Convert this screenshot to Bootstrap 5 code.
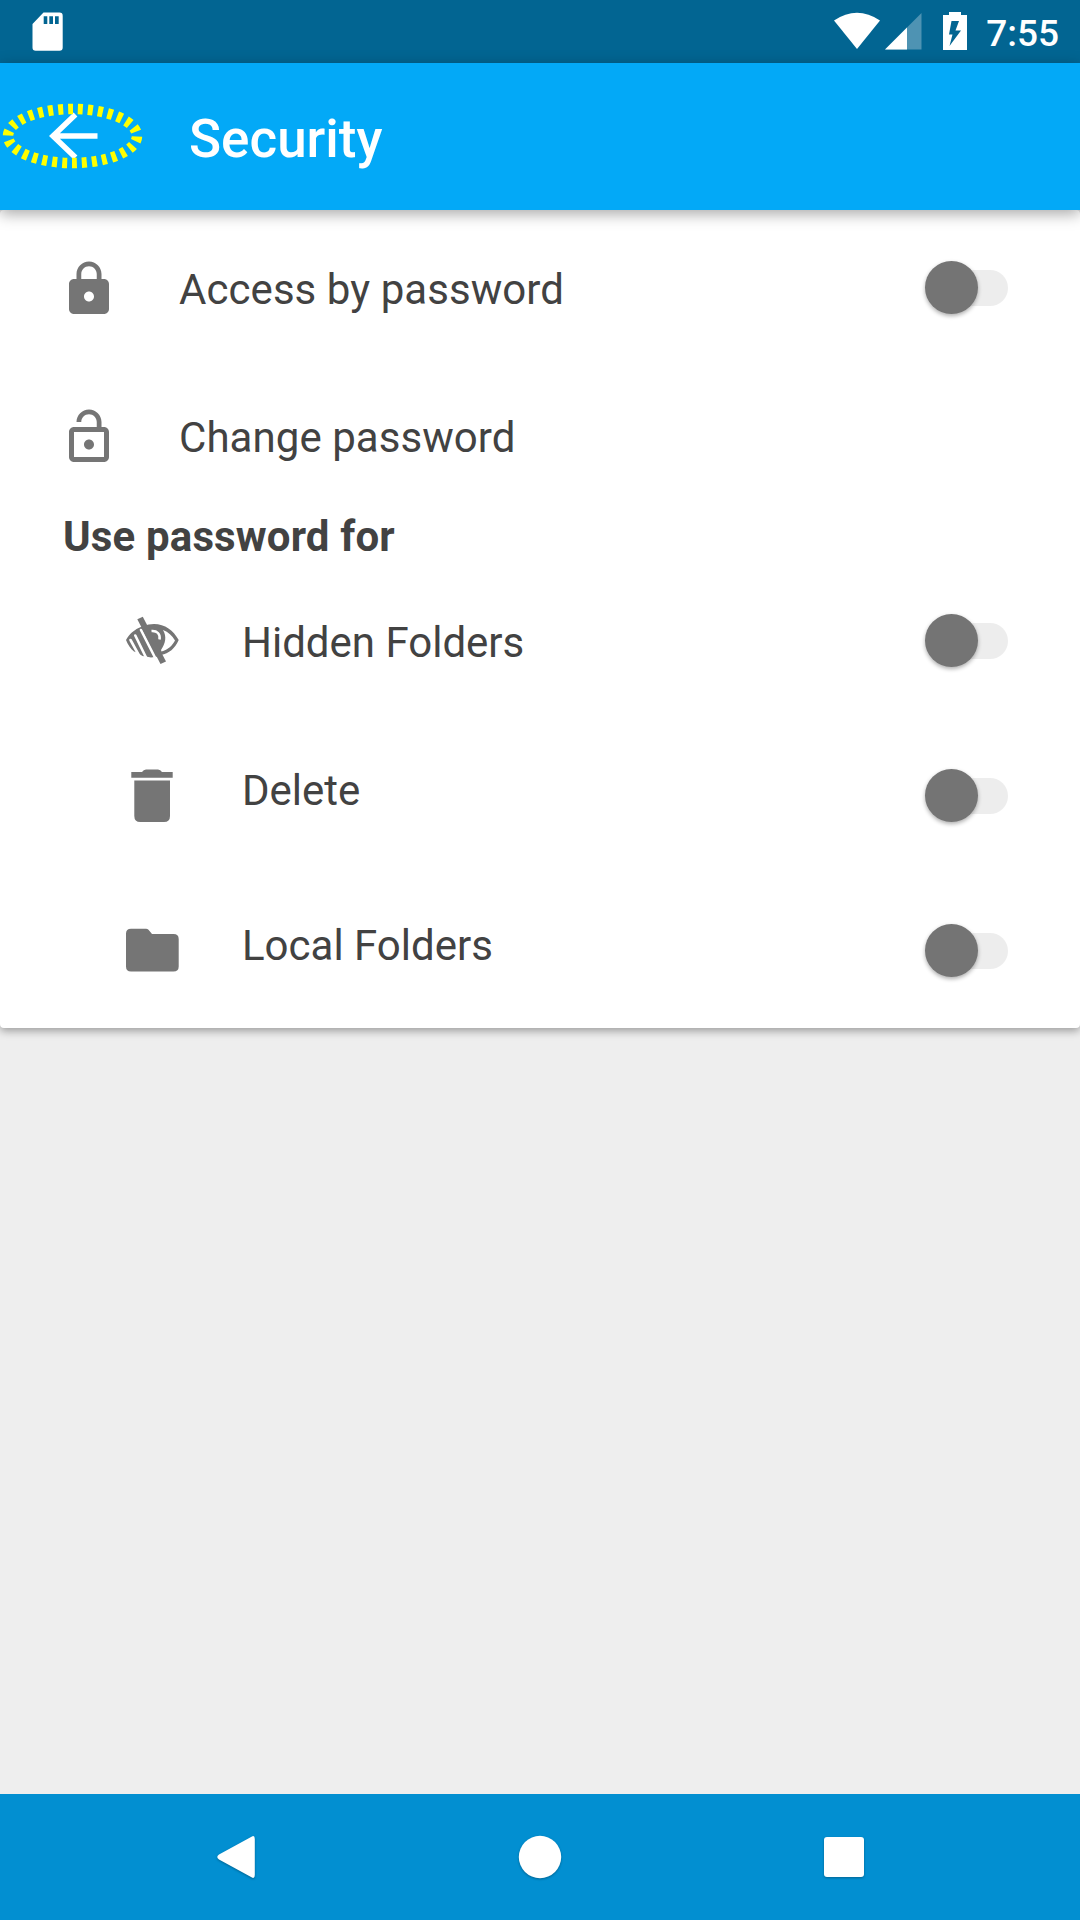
<!DOCTYPE html>
<html lang="en">
<head>
<meta charset="utf-8">
<meta name="viewport" content="width=device-width, initial-scale=1">
<title>Security</title>
<link href="https://cdn.jsdelivr.net/npm/bootstrap@5.3.0/dist/css/bootstrap.min.css" rel="stylesheet">
<style>
  body { font-family: Roboto, "Noto Sans", sans-serif; background: #eee; color: #424242; font-size: 42px; line-height: 54px; height: 1920px; overflow: hidden; }
  svg { display: block; flex: none; }
  .status-bar { height: 63px; background: #026592; padding: 0 21px 0 32px; }
  .clock { font-size: 37px; font-weight: 500; line-height: 63px; padding-top: 3px; margin-left: 18px; }
  .app-bar { height: 147px; background: #03a9f7; padding-bottom: 2px; z-index: 2; box-shadow: 0 4px 14px rgba(0,0,0,.34); }
  .app-title { font-size: 53px; font-weight: 500; line-height: 60px; margin-left: 44px; padding-top: 7px; }
  .settings-card { border-radius: 4px; padding-top: 3px; box-shadow: 0 3px 8px rgba(0,0,0,.35); z-index: 1; }
  .setting { height: 148px; padding: 0 72px 0 59px; }
  .setting-sub { height: 155px; padding-left: 122px; }
  .setting-icon { width: 60px; height: 60px; fill: #757575; }
  .icon-lowered { margin-top: 3px; }
  .setting-label { margin-left: 60px; padding-top: 4px; }
  .label-lowered { padding-top: 6px; letter-spacing: .06px; }
  .label-raised { padding: 0 0 10px; }
  .section-title { height: 54px; padding: 1px 0 0 63px; font-weight: 700; letter-spacing: .15px; }
  .toggle { width: 83px; height: 53px; padding: 9px 0 8px 10px; }
  .toggle-track { height: 36px; border-radius: 18px; background: #ededed; }
  .toggle-thumb { width: 53px; height: 53px; left: 0; top: 0; background: #747474; box-shadow: 0 2px 4px rgba(0,0,0,.32); }
  .nav-bar { height: 126px; background: #028fd1; }
  .nav-bar svg { filter: drop-shadow(0 1px 1px rgba(0,0,0,.3)); }
</style>
<script src="https://cdn.jsdelivr.net/npm/bootstrap@5.3.0/dist/js/bootstrap.bundle.min.js"></script>
</head>
<body class="d-flex flex-column">
  <div class="status-bar d-flex align-items-center text-white">
    <svg width="31" height="63" viewBox="32 0 31 63" fill="#fff"><path fill-rule="evenodd" d="M43.500 12.500H59.500Q62.700 12.500 62.700 15.700V47.500Q62.700 50.700 59.500 50.700H35.700Q32.500 50.700 32.500 47.500V24ZM43.700 16.200V24H47.300V16.200ZM49.300 16.200V24H53V16.200ZM55 16.200V24H58.700V16.200Z"/></svg>
    <svg class="ms-auto" width="134" height="63" viewBox="834 0 134 63" fill="#fff">
      <path d="M834 20.500Q857 5 880 20.500L857 49Z"/>
      <path d="M921.500 13V49.500H885Z" opacity=".3"/><path d="M907 27.500V49.500H885Z"/>
      <path fill-rule="evenodd" d="M949 12H961V15H967V50H943V15H949ZM951.500 21L949 34.500H952.500L949.500 46L961 30.500H955.500L959 21Z"/>
    </svg>
    <span class="clock">7:55</span>
  </div>

  <header class="app-bar d-flex align-items-center text-white position-relative">
    <svg width="145" height="145" viewBox="0 63 145 145" fill="none">
      <path d="M97.500 136H53M75.500 114.500L53 136L75.500 157.500" stroke="#fff" stroke-width="5.500"/>
      <path d="M72.500 109A64.500 27 0 0 1 72.500 163A64.500 27 0 0 1 72.500 109" pathLength="300" stroke="#ff0" stroke-width="10.500" stroke-dasharray="5 5" stroke-dashoffset="-5.500"/>
    </svg>
    <h1 class="app-title mb-0">Security</h1>
  </header>

  <main class="settings-card bg-white position-relative">
    <div class="setting d-flex align-items-center">
      <svg class="setting-icon icon-lowered" viewBox="0 0 24 24"><path d="M18 8h-1V6c0-2.760-2.240-5-5-5S7 3.240 7 6v2H6c-1.100 0-2 .9-2 2v10c0 1.100.9 2 2 2h12c1.100 0 2-.9 2-2V10c0-1.100-.9-2-2-2zm-6 9c-1.100 0-2-.9-2-2s.9-2 2-2 2 .9 2 2-.9 2-2 2zm3.100-9H8.900V6c0-1.710 1.390-3.100 3.100-3.100s3.100 1.390 3.100 3.100v2z"/></svg>
      <span class="setting-label label-lowered">Access by password</span>
      <div class="toggle position-relative ms-auto"><div class="toggle-track"></div><div class="toggle-thumb position-absolute rounded-circle"></div></div>
    </div>
    <div class="setting d-flex align-items-center">
      <svg class="setting-icon icon-lowered" viewBox="0 0 24 24"><path d="M12 17c1.100 0 2-.9 2-2s-.9-2-2-2-2 .9-2 2 .9 2 2 2zm6-9h-1V6c0-2.760-2.240-5-5-5S7 3.240 7 6h1.900c0-1.710 1.390-3.100 3.100-3.100s3.100 1.390 3.100 3.100v2H6c-1.100 0-2 .9-2 2v10c0 1.100.9 2 2 2h12c1.100 0 2-.9 2-2V10c0-1.100-.9-2-2-2zm0 12H6V10h12v10z"/></svg>
      <span class="setting-label label-lowered">Change password</span>
    </div>
    <div class="section-title">Use password for</div>
    <div class="setting setting-sub d-flex align-items-center">
      <svg class="setting-icon" viewBox="122 610.500 60 60">
        <path d="M142 626C134 629 129 634 126 639.500C128 644.500 130.500 648 134 651L137 652L142.500 655.500L146 656L151 657L158 656Z"/>
        <path d="M130.500 639.500L139 655M135.300 635L147 659M141 629.500L156.500 660" fill="none" stroke="#fff" stroke-width="2.600" stroke-linecap="round"/>
        <path fill-rule="evenodd" d="M143 625.500C159 619.500 172 627 178.700 639.500C175 648 169 653 161 654.500L156 646ZM163 629.500C167 636 165.500 643 161 649.500L161.500 651C168 649 172.500 645 175 640C172 635 168.500 631.500 163 629.500Z"/>
        <path d="M137.300 618.700L142.800 616.300L166 661L160.500 663.500Z"/>
        <path d="M151.500 630.500C157 630 160.500 633.500 159.500 639" fill="none" stroke="#fff" stroke-width="2.500"/>
      </svg>
      <span class="setting-label">Hidden Folders</span>
      <div class="toggle position-relative ms-auto"><div class="toggle-track"></div><div class="toggle-thumb position-absolute rounded-circle"></div></div>
    </div>
    <div class="setting setting-sub d-flex align-items-center">
      <svg class="setting-icon" viewBox="122 765.500 60 60"><path d="M134.300 780H170V815.500Q170 821.500 164 821.500H140.300Q134.300 821.500 134.300 815.500ZM131.300 771.500H142Q143.500 769 146 769H158Q160.500 769 162 771.500H172.700V777.300H131.300Z"/></svg>
      <span class="setting-label label-raised">Delete</span>
      <div class="toggle position-relative ms-auto"><div class="toggle-track"></div><div class="toggle-thumb position-absolute rounded-circle"></div></div>
    </div>
    <div class="setting setting-sub d-flex align-items-center">
      <svg class="setting-icon" viewBox="122 921 60 60"><path d="M131 928.700H146Q147.500 928.700 148.500 929.700L152 934H173.500Q178.700 934 178.700 939V966.500Q178.700 971.500 173.500 971.500H131Q126 971.500 126 966.500V933.500Q126 928.700 131 928.700Z"/></svg>
      <span class="setting-label label-raised">Local Folders</span>
      <div class="toggle position-relative ms-auto"><div class="toggle-track"></div><div class="toggle-thumb position-absolute rounded-circle"></div></div>
    </div>
  </main>

  <nav class="nav-bar d-flex justify-content-center mt-auto">
    <svg width="648" height="126" viewBox="216 1794 648 126" fill="#fff">
      <path d="M251.500 1836.700Q254.800 1834.700 254.800 1839V1875Q254.800 1879.300 251.500 1877.300L219 1859.500Q215.500 1857 219 1854.500Z"/>
      <circle cx="540" cy="1857" r="21.200"/>
      <rect x="824" y="1837" width="40" height="40" rx="3"/>
    </svg>
  </nav>
</body>
</html>
